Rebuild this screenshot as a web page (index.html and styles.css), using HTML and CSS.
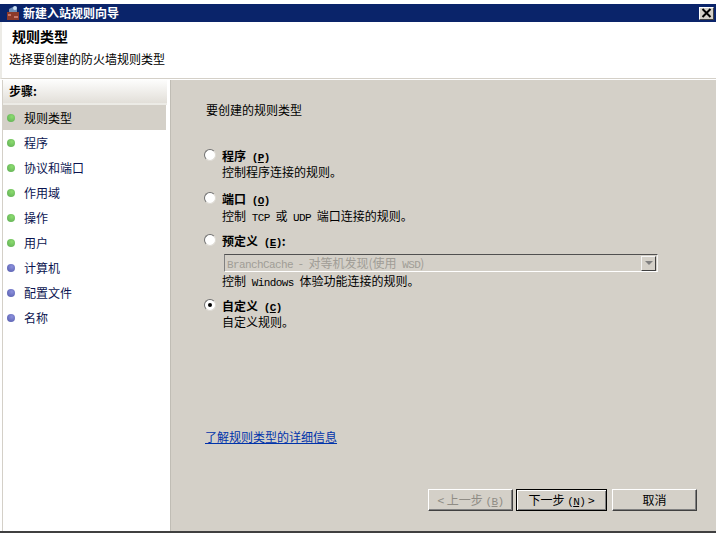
FILE: index.html
```html
<!DOCTYPE html>
<html lang="zh-CN">
<head>
<meta charset="utf-8">
<title>新建入站规则向导</title>
<link rel="stylesheet" href="styles.css">
</head>
<body>
<div class="window">
  <div class="titlebar">
    <svg class="app-icon" width="16" height="16" viewBox="0 0 16 16">
      <rect x="2" y="7" width="12" height="8" fill="#8c3a2a"/>
      <rect x="3" y="9" width="3" height="2" fill="#c9776a"/>
      <rect x="9" y="11" width="4" height="2" fill="#c9776a"/>
      <path d="M4 7 L4 4 L8 2 L12 4 L12 7 Z" fill="#6f8fb8"/>
      <circle cx="10" cy="3" r="2" fill="#cfe3f5"/>
    </svg>
    <span class="title-text">新建入站规则向导</span>
    <span class="close-btn">
      <svg width="11" height="10" viewBox="0 0 11 10"><path d="M1.5 1 L9.5 9 M9.5 1 L1.5 9" stroke="#000" stroke-width="2" fill="none"/></svg>
    </span>
  </div>
  <header class="header">
    <h1 class="header-title">规则类型</h1>
    <p class="header-sub">选择要创建的防火墙规则类型</p>
  </header>
  <div class="main">
    <aside class="steps">
      <div class="steps-head">步骤:</div>
      <ul class="step-list">
        <li class="step current"><i class="dot green"></i>规则类型</li>
        <li class="step"><i class="dot green"></i>程序</li>
        <li class="step"><i class="dot green"></i>协议和端口</li>
        <li class="step"><i class="dot green"></i>作用域</li>
        <li class="step"><i class="dot green"></i>操作</li>
        <li class="step"><i class="dot green"></i>用户</li>
        <li class="step"><i class="dot blue"></i>计算机</li>
        <li class="step"><i class="dot blue"></i>配置文件</li>
        <li class="step"><i class="dot blue"></i>名称</li>
      </ul>
    </aside>
    <section class="content">
      <p class="prompt">要创建的规则类型</p>
      <div class="option opt-program">
        <i class="radio"></i>
        <div class="option-body">
          <div class="opt-label">程序 <span class="latin">(<u>P</u>)</span></div>
          <div class="opt-desc">控制程序连接的规则。</div>
        </div>
      </div>
      <div class="option opt-port">
        <i class="radio"></i>
        <div class="option-body">
          <div class="opt-label">端口 <span class="latin">(<u>O</u>)</span></div>
          <div class="opt-desc">控制 <span class="latin">TCP</span> 或 <span class="latin">UDP</span> 端口连接的规则。</div>
        </div>
      </div>
      <div class="option opt-predef">
        <i class="radio"></i>
        <div class="option-body">
          <div class="opt-label">预定义 <span class="latin">(<u>E</u>)</span>:</div>
          <div class="select">
            <span class="select-text"><span class="latin">BranchCache</span> - 对等机发现(使用 <span class="latin">WSD</span>)</span>
            <span class="select-arrow"><i class="tri"></i></span>
          </div>
          <div class="opt-desc">控制 <span class="latin">Windows</span> 体验功能连接的规则。</div>
        </div>
      </div>
      <div class="option opt-custom">
        <i class="radio checked"></i>
        <div class="option-body">
          <div class="opt-label">自定义 <span class="latin">(<u>C</u>)</span></div>
          <div class="opt-desc">自定义规则。</div>
        </div>
      </div>
      <a class="help-link" href="#">了解规则类型的详细信息</a>
      <div class="buttons">
        <button class="btn btn-back" disabled>&lt; 上一步 <span class="latin">(<u>B</u>)</span></button>
        <button class="btn btn-next">下一步 <span class="latin">(<u>N</u>)</span> &gt;</button>
        <button class="btn btn-cancel">取消</button>
      </div>
    </section>
  </div>
</div>
</body>
</html>
```

FILE: styles.css
```css
html, body {
  margin: 0;
  padding: 0;
  height: 100%;
  overflow: hidden;
}
body {
  background: #d4d0c8;
  font-family: "Noto Sans CJK SC", "Liberation Sans", sans-serif;
  font-size: 12px;
  color: #000;
}
.window {
  width: 716px;
  height: 533px;
  box-sizing: border-box;
  display: flex;
  flex-direction: column;
  padding-top: 4px;
  background: #fff;
  border-bottom: 2px solid #404040;
}
.titlebar {
  height: 18px;
  flex: none;
  background: #0a246a;
  display: flex;
  align-items: center;
  padding: 0 2px 0 5px;
  color: #fff;
  font-weight: 700;
}
.app-icon { flex: none; margin-right: 2px; }
.title-text { flex: 1; line-height: 16px; }
.close-btn {
  width: 15px;
  height: 13px;
  background: #d4d0c8;
  border: 1px solid;
  border-color: #fff #404040 #404040 #fff;
  box-sizing: border-box;
  display: flex;
  align-items: center;
  justify-content: center;
}
.header {
  flex: none;
  height: 57px;
  box-sizing: border-box;
  background: #fff;
  padding: 5px 0 0 9px;
  border-left: 2px solid #ecebe6;
  border-bottom: 1px solid #d4d0c8;
}
.header-title {
  margin: 0 0 0 1px;
  font-size: 14px;
  line-height: 18px;
  font-weight: 700;
}
.header-sub {
  margin: 6px 0 0 -2px;
  line-height: 16px;
}
.main {
  flex: 1;
  display: flex;
  min-height: 0;
  background: #fff;
  padding-top: 1px;
}
.steps {
  width: 165px;
  flex: none;
  margin-left: 2px;
  box-sizing: border-box;
  background: #fff;
  border-left: 1px solid #d4d0c8;
}
.steps-head {
  height: 23px;
  line-height: 21px;
  padding-left: 6px;
  font-weight: 700;
  background: linear-gradient(#fdfdfc, #e2dfd9);
  border-bottom: 2px solid #ecebe6;
}
.step-list {
  list-style: none;
  margin: 0;
  padding: 0 1px 0 0;
}
.step {
  height: 25px;
  line-height: 24px;
  display: flex;
  align-items: center;
  padding-left: 4px;
  color: #0a1450;
}
.step.current {
  background: #d4d0c8;
  color: #000;
}
.dot {
  width: 8px;
  height: 8px;
  border-radius: 50%;
  margin-right: 9px;
  flex: none;
}
.dot.green { background: radial-gradient(circle at 60% 35%, #8cdc70, #5aa850); }
.dot.blue { background: radial-gradient(circle at 60% 35%, #8c90dc, #5058a8); }
.content {
  flex: 1;
  margin-left: 3px;
  background: #d4d0c8;
  border-left: 1px solid #c0bdb5;
  padding-left: 34px;
  display: flex;
  flex-direction: column;
  position: relative;
}
.prompt {
  margin: 22px 0 0 1px;
  line-height: 16px;
}
.option {
  display: flex;
  line-height: 16px;
  margin-left: -1px;
  word-spacing: 3px;
}
.opt-program { margin-top: 30px; }
.opt-port { margin-top: 11px; }
.opt-predef { margin-top: 9px; }
.opt-custom { margin-top: 9px; }
.radio {
  width: 12px;
  height: 12px;
  box-sizing: border-box;
  border-radius: 50%;
  background: #fff;
  border: 1px solid;
  border-color: #707070 #dedbd5 #dedbd5 #707070;
  margin: 1px 6px 0 0;
  flex: none;
  position: relative;
}
.radio.checked::after {
  content: "";
  position: absolute;
  left: 3px;
  top: 3px;
  width: 4px;
  height: 4px;
  border-radius: 50%;
  background: #000;
}
.opt-label { font-weight: 700; }
.opt-label u { text-decoration: underline; }
.latin {
  font-family: "Liberation Mono", monospace;
  font-size: 11px;
  letter-spacing: -0.6px;
  line-height: 0;
}
.opt-port .opt-desc { margin-top: 1px; }
.select {
  width: 434px;
  height: 18px;
  margin: 5px 0 1px 2px;
  box-sizing: border-box;
  border: 1px solid;
  border-color: #505050 #f4f4f4 #fff #808080;
  display: flex;
  align-items: center;
  color: #a09d96;
  background: #d4d0c8;
}
.select-text { flex: 1; padding-left: 2px; line-height: 16px; }
.select-arrow {
  width: 15px;
  height: 15px;
  margin-right: 1px;
  box-sizing: border-box;
  border: 1px solid;
  border-color: #f4f4f4 #404040 #404040 #f4f4f4;
  display: flex;
  align-items: center;
  justify-content: center;
}
.tri {
  width: 0;
  height: 0;
  border-left: 4px solid transparent;
  border-right: 4px solid transparent;
  border-top: 4px solid #808080;
}
.help-link {
  margin-top: 99px;
  align-self: flex-start;
  line-height: 16px;
  color: #0033aa;
  text-decoration: underline;
}
.buttons {
  display: flex;
  margin-top: 44px;
  margin-left: 223px;
  word-spacing: 3px;
}
.btn {
  height: 22px;
  padding: 0 0 1px;
  box-sizing: border-box;
  background: #d4d0c8;
  font: inherit;
  color: #000;
  border: 1px solid;
  border-color: #fff #404040 #404040 #fff;
  box-shadow: inset -1px -1px 0 #808080;
}
.btn-back {
  width: 85px;
  color: #8f8c85;
  margin-right: 3px;
}
.btn-next {
  width: 91px;
  margin-right: 5px;
  border: 1px solid #000;
  box-shadow: inset 1px 1px 0 #fff, inset -1px -1px 0 #808080;
}
.btn-cancel { width: 85px; }
```
